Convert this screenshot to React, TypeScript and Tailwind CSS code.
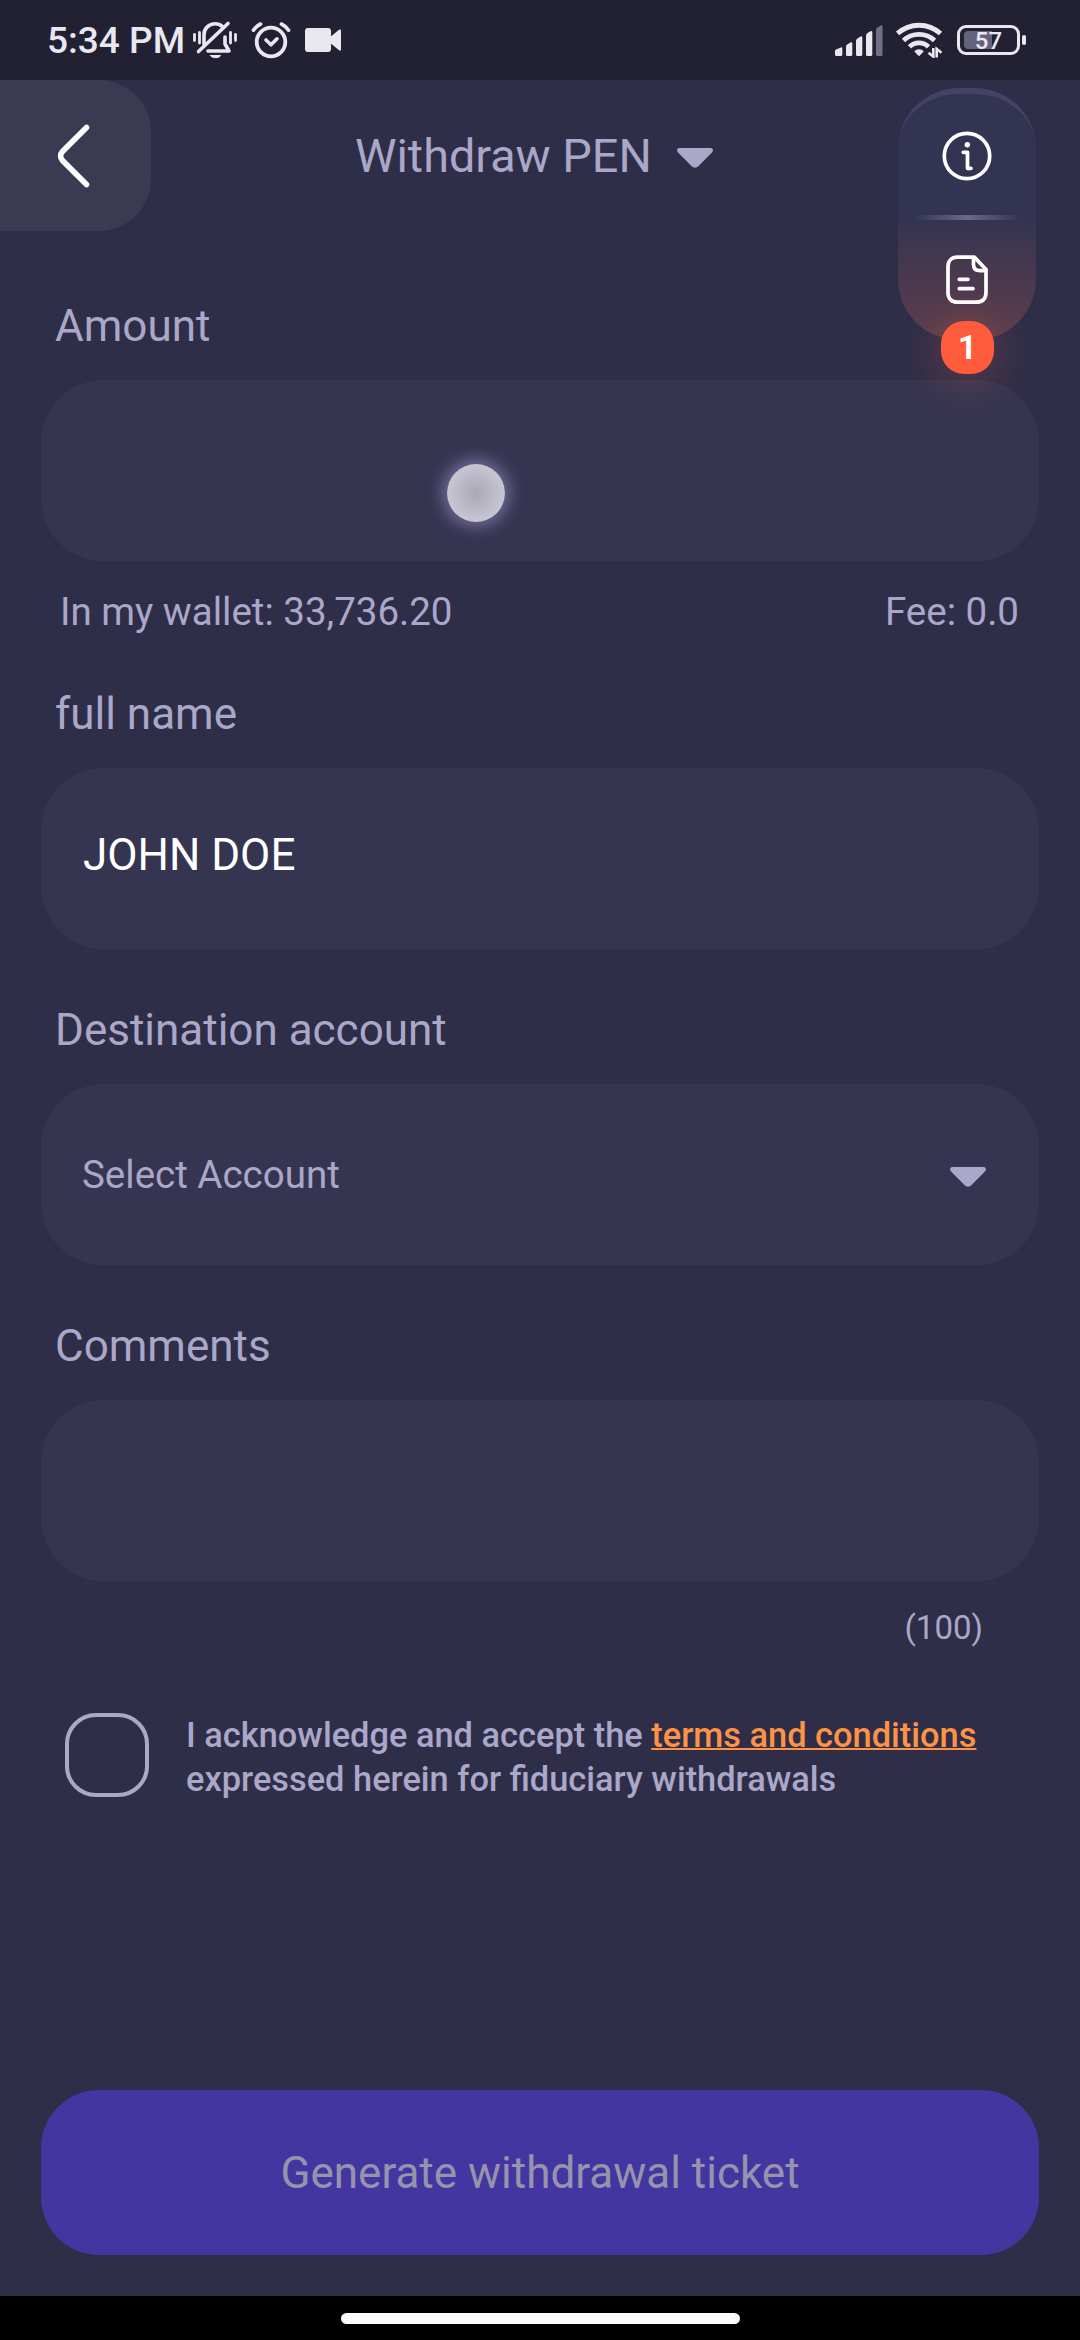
import React, { useState } from 'react';

const SilentIcon = () => (
  <svg width="46" height="40" viewBox="0 0 46 40" fill="none" stroke="#e9e7ef" strokeLinecap="round" strokeLinejoin="round">
    <path d="M12 24V14.5C12 8.5 17 3.8 23 3.8C26 3.8 28.5 4.8 30.5 6.6" strokeWidth="3.6" />
    <path d="M33 17V24L37 31H16" strokeWidth="3.6" />
    <path d="M6.5 31.5L36 3.5" strokeWidth="3.6" />
    <path d="M18.5 35.5H28.5C27.5 38.5 19.5 38.5 18.5 35.5Z" fill="#e9e7ef" strokeWidth="1" />
    <path d="M2.5 14.5V20.5M7.5 12.5V23M38.5 12.5V23M43.5 14.5V20.5" strokeWidth="2.8" />
  </svg>
);

const AlarmIcon = () => (
  <svg width="40" height="40" viewBox="0 0 40 40" fill="none" stroke="#e9e7ef" strokeLinecap="round" strokeLinejoin="round">
    <circle cx="20" cy="22" r="14.3" strokeWidth="3.8" />
    <path d="M15 20L20 24.8L26 18.8" strokeWidth="3.6" />
    <path d="M2.4 10.2C4.4 7.4 6.6 5.4 9.6 4M37.6 10.2C35.6 7.4 33.4 5.4 30.4 4" strokeWidth="3.6" />
  </svg>
);

const VideoIcon = () => (
  <svg width="36" height="24" viewBox="0 0 36 24" fill="#e9e7ef">
    <rect width="26" height="24" rx="3" />
    <path d="M24 10L34 1.8C35 1 36 1.4 36 2.6V21.4C36 22.6 35 23 34 22.2L24 14Z" />
  </svg>
);

const SignalIcon = () => (
  <svg width="48" height="31" viewBox="0 0 48 31" fill="#e9e7ef">
    <path d="M0 26Q0 25 1 24.6L6 22.4Q7.3 22 7.3 23.4V29.5Q7.3 31 5.8 31H1.5Q0 31 0 29.5Z" />
    <path d="M11 22Q11 20 12.5 19.2L15.5 17.4Q17.3 16.6 17.3 18.4V29.5Q17.3 31 15.8 31H12.5Q11 31 11 29.5Z" />
    <path d="M21 16Q21 14.4 22.5 13.5L25.5 11.6Q27.3 10.8 27.3 12.8V29.5Q27.3 31 25.8 31H22.5Q21 31 21 29.5Z" />
    <path d="M31 10.5Q31 9 32.5 8L35.5 6.2Q37.3 5.4 37.3 7.4V29.5Q37.3 31 35.8 31H32.5Q31 31 31 29.5Z" />
    <path d="M41 5Q41 3.5 42.5 2.5L45.7 .5Q47.5 -.2 47.5 1.8V29.5Q47.5 31 46 31H42.5Q41 31 41 29.5Z" fill="#716e88" />
  </svg>
);

const WifiIcon = () => (
  <svg width="47" height="36" viewBox="0 0 47 36" fill="none" stroke="#e9e7ef">
    <path d="M1.5 11.5C14 .4 32 .4 44.5 11.5" strokeWidth="5" />
    <path d="M7.5 18.5C16 10.3 30 10.3 38.5 18.5" strokeWidth="4.8" />
    <path d="M13.5 24.8C18.5 19.5 27.5 19.5 32.5 24.8" strokeWidth="4.8" />
    <path d="M18.3 29.6C20.5 26.6 25.5 26.6 27.7 29.6L23 34.3Z" fill="#e9e7ef" stroke="none" />
    <path d="M37.3 26V34.6L32.5 30.8M40.7 35.5V27L45.5 30.8" strokeWidth="2.6" />
  </svg>
);

const CaretIcon = () => (
  <svg width="36" height="20" viewBox="0 0 36 20" fill="#aaa7c9">
    <path d="M2.5 0H33.5C36 0 36.7 2.6 35 4.4L21.5 18C19.5 20.3 16.5 20.3 14.5 18L1 4.4C-.7 2.6 0 0 2.5 0Z" />
  </svg>
);

const BackIcon = () => (
  <svg width="34" height="64" viewBox="0 0 34 64" fill="none" stroke="#fff" strokeWidth="5.6" strokeLinecap="round">
    <path d="M29.5 3.5L5.5 27.5C3 30.2 3 33.8 5.5 36.5L29.5 60.5" />
  </svg>
);

const InfoIcon = () => (
  <svg width="50" height="50" viewBox="0 0 50 50" fill="none" stroke="#fff" strokeLinecap="round" strokeLinejoin="round">
    <circle cx="25" cy="25" r="22.7" strokeWidth="3.7" />
    <circle cx="25.3" cy="13.7" r="2.7" fill="#fff" stroke="none" />
    <path d="M21.3 21.3H25.5V37.3H29" strokeWidth="3.7" />
  </svg>
);

const DocumentIcon = () => (
  <svg width="42" height="50" viewBox="0 0 42 50" fill="none" stroke="#fff" strokeWidth="3.7" strokeLinecap="round" strokeLinejoin="round">
    <path d="M28.5 2.2H11.5C5.5 2.2 2 6 2 11.5V37.5C2 43.5 5.5 47.2 11.5 47.2H30.5C36.5 47.2 40 43.5 40 37.5V14.5Z" />
    <path d="M27.5 3V9.5C27.5 13.5 30 15.7 34 15.7H39.5" />
    <path d="M13.3 24.3H22M13.3 33.7H27" />
  </svg>
);

interface FieldProps {
  label: string;
  children?: React.ReactNode;
}

const Field: React.FC<FieldProps> = ({ label, children }) => (
  <div>
    <div className="h-[52px] pl-[14px] text-[44px] leading-[52px] text-[#aaa7c9]">{label}</div>
    <div className="relative mt-7 flex h-[181px] items-center justify-between rounded-[62px] bg-[#363551] px-[41px]">
      {children}
    </div>
  </div>
);

const StatusBar = () => (
  <div className="flex h-20 items-center justify-between bg-[#212133] pl-[47px] pr-[54px] text-[#e9e7ef]">
    <div className="flex items-center">
      <span className="mt-[2px] w-[145px] whitespace-nowrap text-[37px] font-medium leading-[44px]">5:34 PM</span>
      <SilentIcon />
      <div className="ml-[13px]"><AlarmIcon /></div>
      <div className="ml-[14px]"><VideoIcon /></div>
    </div>
    <div className="flex items-center">
      <SignalIcon />
      <div className="ml-[13px]"><WifiIcon /></div>
      <div className="relative ml-[14px] flex h-[30px] w-[63px] items-center justify-center rounded-[9px] border-[3px] border-[#e9e7ef]">
        <div className="absolute left-1 top-[3px] h-[18px] w-7 rounded-l-[4px] bg-[#64617d]"></div>
        <span className="relative mt-[2px] text-[24px] font-medium leading-6">57</span>
      </div>
      <div className="ml-[2px] h-[10px] w-1 rounded-full bg-[#e9e7ef]"></div>
    </div>
  </div>
);

const QuickMenu = () => (
  <div className="absolute left-[898px] top-2 z-10 flex h-[252px] w-[138px] flex-col items-center rounded-[61px] border-t-[6px] border-[#454268] bg-[linear-gradient(180deg,#333452_0%,#333452_51%,#3f3750_62%,#4b394f_77%,#5b3f4c_100%)]">
    <div className="mt-[37px]"><InfoIcon /></div>
    <div className="mt-[34px] h-[5px] w-[106px] bg-[linear-gradient(90deg,#6b698c00,#6b698c,#6b698c00)]"></div>
    <div className="mt-[35px]"><DocumentIcon /></div>
    <div className="absolute left-[43px] top-[227px] flex h-[53px] w-[53px] items-center justify-center rounded-[23px] bg-[#ff5c3d] text-[33px] font-bold leading-9 text-white shadow-[0_4px_42px_4px_rgba(255,100,60,0.24)]">
      1
    </div>
  </div>
);

const App: React.FC = () => {
  const [accepted, setAccepted] = useState(false);

  return (
    <div className="flex h-[2340px] w-[1080px] flex-col overflow-hidden bg-[#2f2e49] font-['Roboto',sans-serif]">
      <StatusBar />

      <header className="relative flex h-[151px] items-center">
        <button className="flex h-[151px] w-[151px] items-center rounded-r-[52px] bg-[#3a3a53] pl-[57px]">
          <BackIcon />
        </button>
        <button className="ml-[204px] flex items-center gap-[27px] text-[#aaa7c9]">
          <span className="w-[295px] whitespace-nowrap text-left text-[46.75px] leading-[56px]">Withdraw PEN</span>
          <div className="mt-1"><CaretIcon /></div>
        </button>
        <QuickMenu />
      </header>

      <main className="flex flex-1 flex-col px-[41px] pt-[69px]">
        <Field label="Amount">
          <div className="absolute left-[406px] top-[84px] h-[58px] w-[58px] rounded-full bg-[radial-gradient(circle,#a9a8b5_0%,#c9c6d4_70%)] shadow-[0_0_14px_6px_#69668f]"></div>
        </Field>
        <div className="mt-7 flex h-[46px] justify-between pl-[19px] pr-5 text-[38.5px] leading-[46px] text-[#aaa7c9]">
          <span>In my wallet: 33,736.20</span>
          <span>Fee: 0.0</span>
        </div>

        <div className="mt-[53px] flex flex-col gap-[55px]">
          <Field label="full name">
            <span className="-mt-[7px] ml-px text-[44px] leading-[52px] text-white">JOHN DOE</span>
          </Field>
          <Field label="Destination account">
            <span className="text-[38.5px] leading-[46px] text-[#aaa7c9]">Select Account</span>
            <div className="mr-3 mt-1"><CaretIcon /></div>
          </Field>
          <Field label="Comments" />
        </div>
        <div className="mt-[27px] pr-[56px] text-right text-[33px] leading-[40px] text-[#aaa7c9]">(100)</div>

        <div className="mt-[65px] flex pl-6">
          <button
            onClick={() => setAccepted(!accepted)}
            className="h-[84px] w-[84px] shrink-0 rounded-[31px] border-4 border-[#aaa7c9]"
            aria-checked={accepted}
            role="checkbox"
          ></button>
          <p className="ml-[37px] mt-px whitespace-nowrap text-[34.4px] font-medium leading-[43.5px] text-[#aaa7c9]">
            I acknowledge and accept the{' '}
            <a className="text-[#fe9345] underline decoration-2 underline-offset-[1px] [text-decoration-skip-ink:none]">terms and conditions</a>
            <br />
            expressed herein for fiduciary withdrawals
          </p>
        </div>

        <button className="mb-[41px] mt-auto h-[165px] rounded-[58px] bg-[#4436a1] text-[44px] leading-[52px] text-[#9793ac]">
          Generate withdrawal ticket
        </button>
      </main>

      <div className="flex h-11 items-center justify-center bg-black">
        <div className="h-[11px] w-[399px] rounded-full bg-[#fcfcfc]"></div>
      </div>
    </div>
  );
};

export default App;
